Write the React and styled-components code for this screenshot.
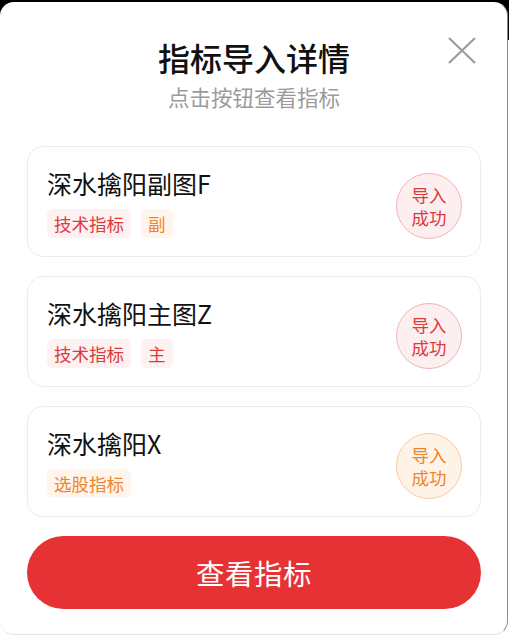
import React from "react";
import styled, { createGlobalStyle } from "styled-components";

const Global = createGlobalStyle`
  html, body { margin: 0; padding: 0; background: #fff; }
  * { box-sizing: border-box; }
  body { font-family: "Noto Sans CJK SC", "Noto Sans", sans-serif; }
`;

const Page = styled.div`
  width: 509px;
  height: 636px;
  background: linear-gradient(#000 0, #000 40px, #fff 40px, #fff 100%);
  padding-top: 2px;
`;

const Modal = styled.div`
  width: 508px;
  height: 633px;
  background: #fff;
  border-radius: 14px;
  border-right: 1.5px solid #8c8c8c;
  border-bottom: 1px solid #e4e4e4;
  padding: 34px 26px 0 27px;
  display: flex;
  flex-direction: column;
`;

const Header = styled.div`
  position: relative;
  display: flex;
  flex-direction: column;
  align-items: center;
  margin-bottom: 35px;
`;

const Title = styled.h1`
  margin: 0;
  font-size: 32px;
  line-height: 42px;
  font-weight: 500;
  color: #111;
`;

const Subtitle = styled.div`
  margin-top: 5px;
  font-size: 21.5px;
  line-height: 28px;
  color: #9b9b9b;
`;

const Close = styled.button`
  position: absolute;
  right: 5px;
  top: 1px;
  width: 28px;
  height: 28px;
  padding: 0;
  border: none;
  background: none;
  cursor: pointer;
`;

const List = styled.div`
  display: flex;
  flex-direction: column;
  gap: 19px;
`;

const Card = styled.div`
  height: 111px;
  border: 1px solid #ececec;
  border-radius: 16px;
  padding: 20px 18px 18px 19px;
  display: flex;
  align-items: center;
  justify-content: space-between;
`;

const Info = styled.div`
  display: flex;
  flex-direction: column;
  gap: 10px;
  align-self: stretch;
`;

const Name = styled.div`
  font-size: 25px;
  line-height: 32px;
  color: #111;
  font-family: "Noto Sans CJK SC", "Noto Sans", sans-serif;
`;

const Tags = styled.div`
  display: flex;
  gap: 10px;
`;

const palette = {
  red: { bg: "#fdf1f1", fg: "#dc3a3c", badgeBg: "#fdeff0", border: "#f0b4b7" },
  orange: { bg: "#fff5ec", fg: "#ee8530", badgeBg: "#fff2e6", border: "#f6cca3" },
};

const Tag = styled.span`
  height: 29px;
  padding: 0 7px;
  border-radius: 6px;
  font-size: 17.5px;
  line-height: 29px;
  background: ${(p) => palette[p.$tone].bg};
  color: ${(p) => palette[p.$tone].fg};
`;

const Badge = styled.div`
  width: 66px;
  height: 66px;
  margin-top: 6px;
  border-radius: 50%;
  border: 1px solid ${(p) => palette[p.$tone].border};
  background: ${(p) => palette[p.$tone].badgeBg};
  color: ${(p) => palette[p.$tone].fg};
  font-size: 17.5px;
  line-height: 23px;
  display: flex;
  flex-direction: column;
  align-items: center;
  justify-content: center;
`;

const Action = styled.button`
  margin-top: 19px;
  height: 73px;
  width: 100%;
  border: none;
  border-radius: 37px;
  background: #e63234;
  color: #fff;
  font-family: "Noto Sans CJK SC", "Noto Sans", sans-serif;
  font-size: 28.5px;
  letter-spacing: 0.5px;
  cursor: pointer;
`;

const items = [
  { name: "深水擒阳副图F", tags: [["技术指标", "red"], ["副", "orange"]], tone: "red" },
  { name: "深水擒阳主图Z", tags: [["技术指标", "red"], ["主", "red"]], tone: "red" },
  { name: "深水擒阳X", tags: [["选股指标", "orange"]], tone: "orange" },
];

export default function App() {
  return (
    <>
      <Global />
      <Page>
        <Modal>
          <Header>
            <Title>指标导入详情</Title>
            <Subtitle>点击按钮查看指标</Subtitle>
            <Close aria-label="关闭">
              <svg width="28" height="28" viewBox="0 0 28 28">
                <path d="M1 1 L27 26 M27 1 L1 26" stroke="#9c9c9c" strokeWidth="2.2" fill="none" />
              </svg>
            </Close>
          </Header>
          <List>
            {items.map((it) => (
              <Card key={it.name}>
                <Info>
                  <Name>{it.name}</Name>
                  <Tags>
                    {it.tags.map(([t, tone]) => (
                      <Tag key={t} $tone={tone}>{t}</Tag>
                    ))}
                  </Tags>
                </Info>
                <Badge $tone={it.tone}>
                  <span>导入</span>
                  <span>成功</span>
                </Badge>
              </Card>
            ))}
          </List>
          <Action>查看指标</Action>
        </Modal>
      </Page>
    </>
  );
}
